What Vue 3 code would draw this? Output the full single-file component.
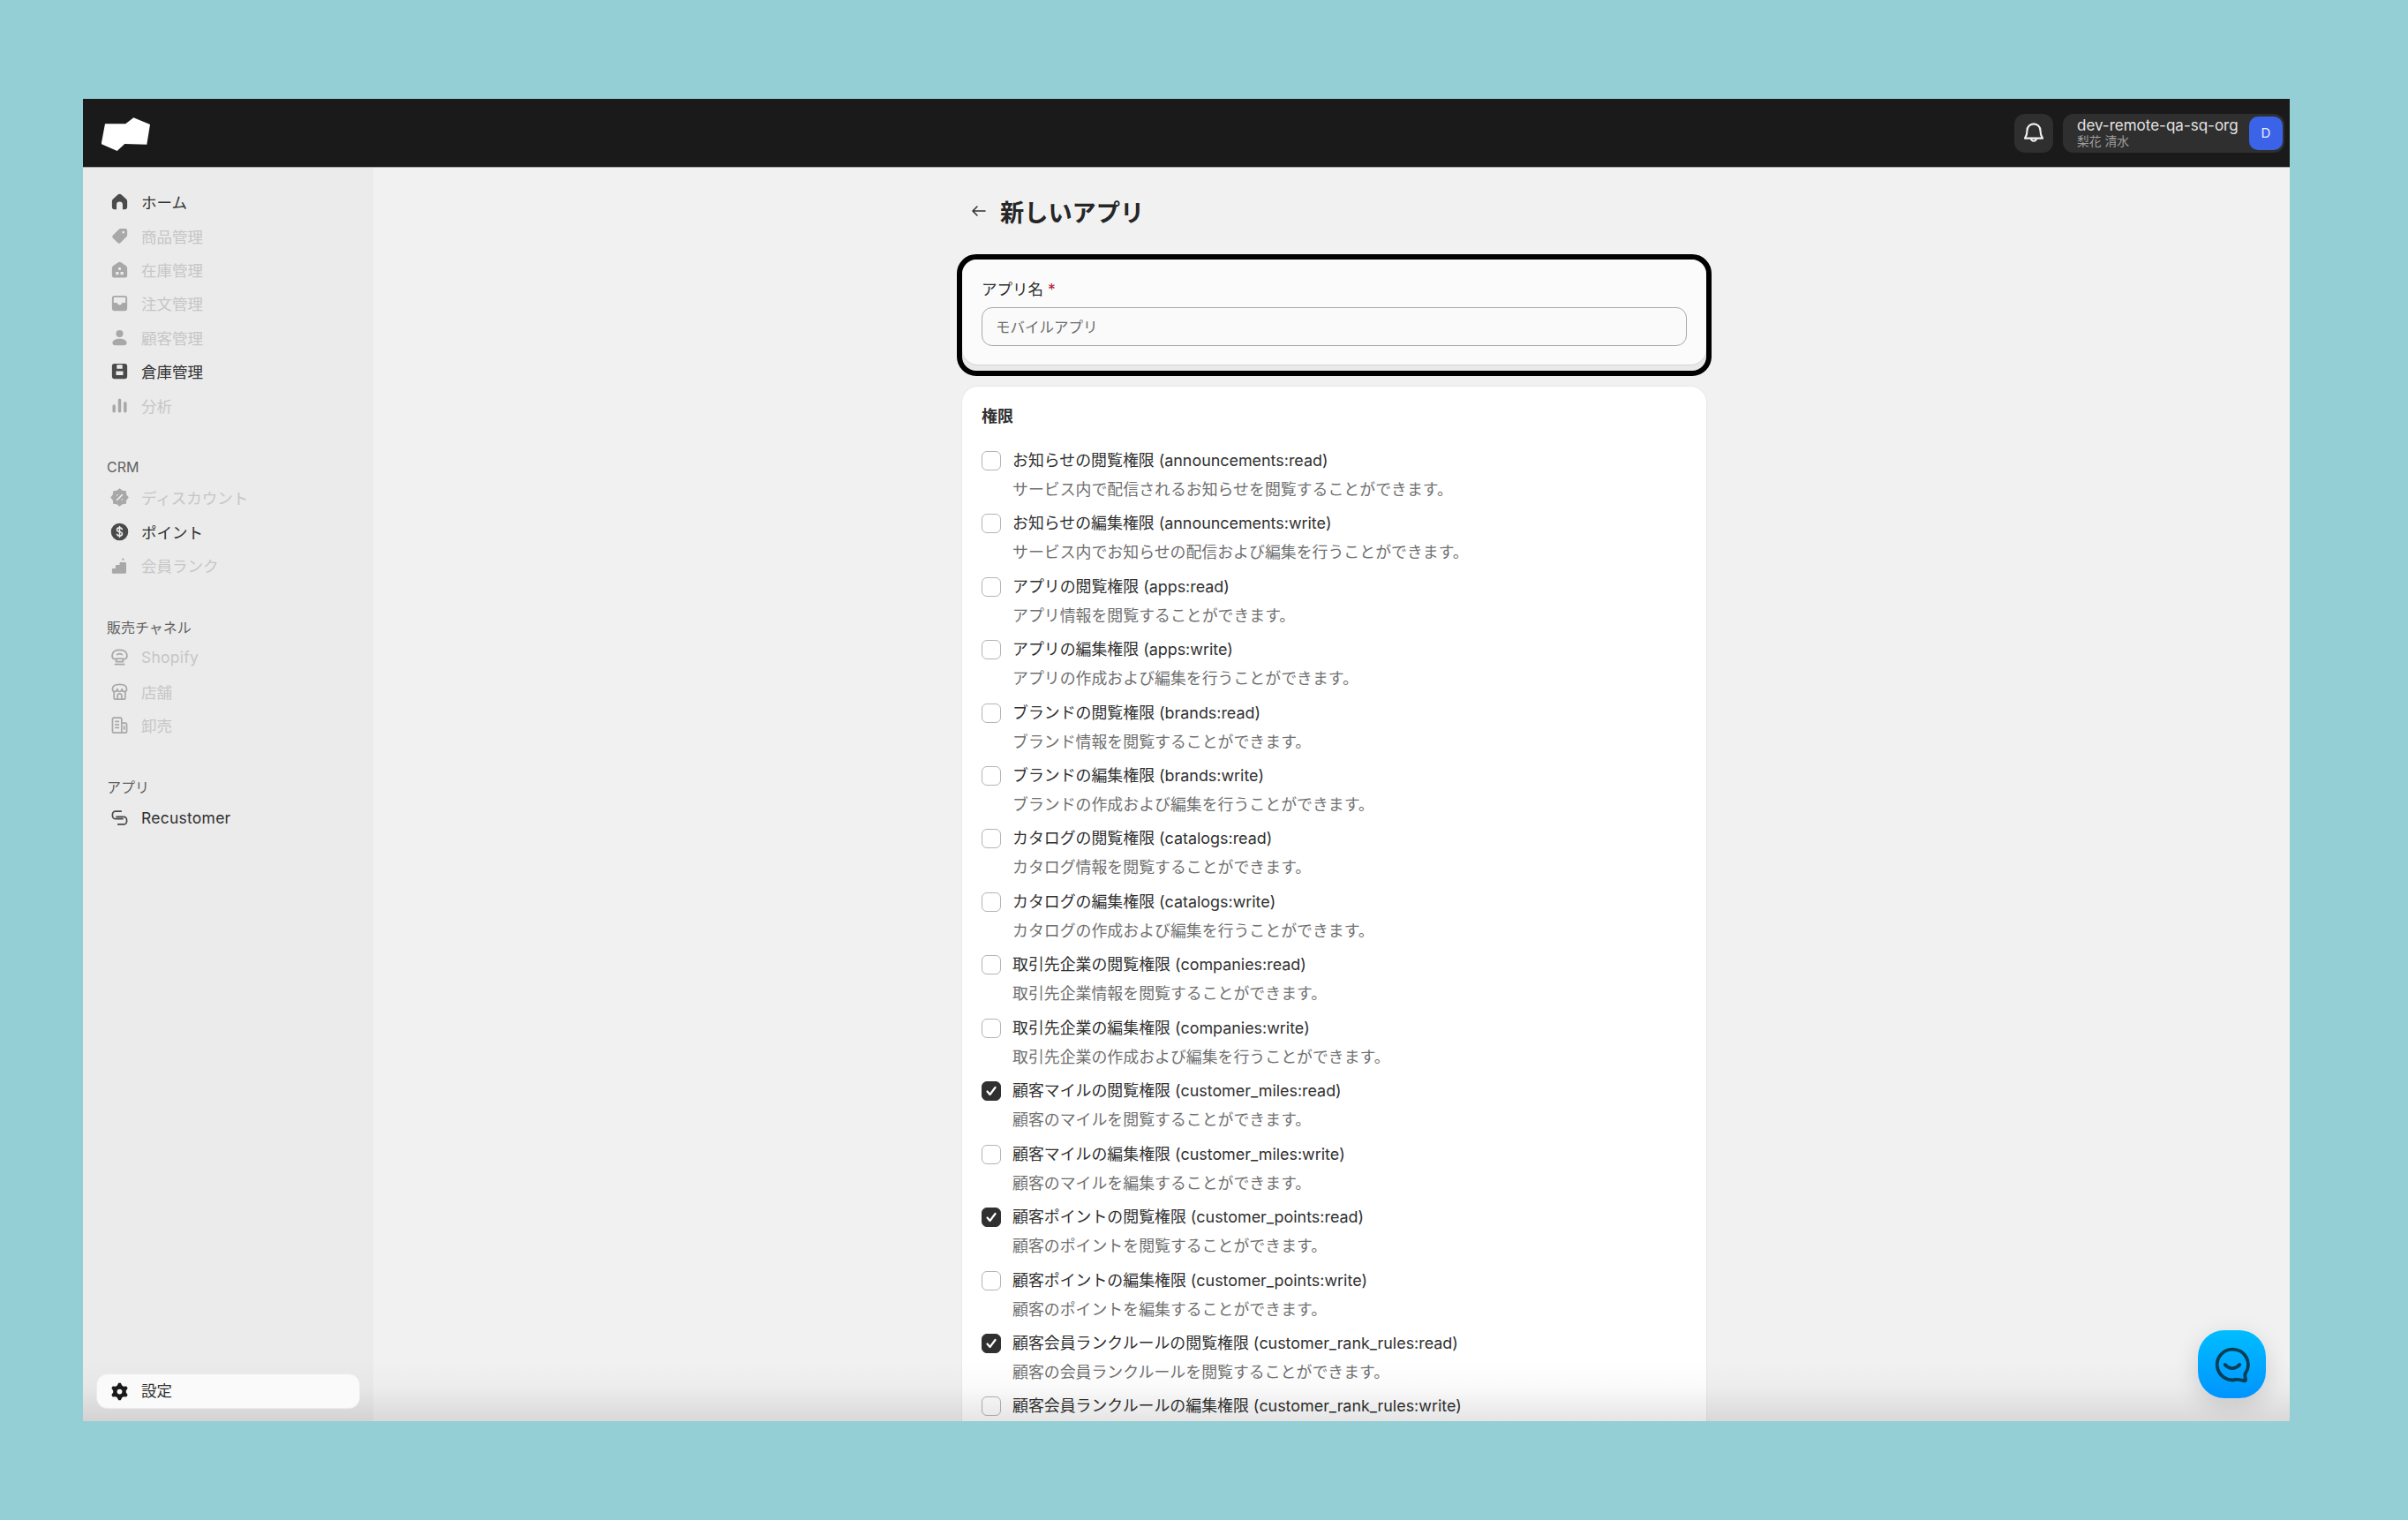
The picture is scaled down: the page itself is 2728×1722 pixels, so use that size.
<template>
  <div class="page">
    <div class="window">
      <header class="topbar">
        <svg class="logo" viewBox="0 0 60 40" width="60" height="40">
          <path d="M4 8.3h23.3l9-7 18.7 7.7-3.7 22.7-25-.7-8.6 8-18-8z" fill="#fff" />
        </svg>
        <div class="topbar-right">
          <button class="bell-btn" aria-label="通知">
            <svg viewBox="0 0 24 24" width="30" height="30" fill="none" stroke="#f2f2f2" stroke-width="1.700" stroke-linejoin="round">
              <path d="M12 3.500a6 6 0 0 0-6 6c0 4-.8 5.300-2 7h16c-1.200-1.700-2-3-2-7a6 6 0 0 0-6-6z" />
              <path d="M9.500 16.500a2.500 2.500 0 0 0 5 0" />
            </svg>
          </button>
          <div class="account">
            <div class="account-text">
              <span class="org">dev-remote-qa-sq-org</span>
              <span class="user">梨花 清水</span>
            </div>
            <span class="avatar">D</span>
          </div>
        </div>
      </header>

      <div class="body">
        <aside class="sidebar">
          <nav v-for="(group, i) in navGroups" :key="i" class="nav-group">
            <div v-if="group.title" class="nav-title">{{ group.title }}</div>
            <a v-for="item in group.items" :key="item.label" class="nav-item" :class="{ muted: item.muted, latin: item.latin }">
              <svg class="nav-icon" viewBox="0 0 20 20" width="23" height="23">
                <path v-if="icons[item.icon].fill" :d="icons[item.icon].fill" fill="currentColor" fill-rule="evenodd" />
                <path v-if="icons[item.icon].line" :d="icons[item.icon].line" fill="none" stroke="currentColor" stroke-width="1.500" stroke-linecap="round" stroke-linejoin="round" />
                <path v-if="icons[item.icon].cut" :d="icons[item.icon].cut" fill="none" stroke="#ebebeb" stroke-width="1.400" stroke-linecap="round" stroke-linejoin="round" />
              </svg>
              <span>{{ item.label }}</span>
            </a>
          </nav>
          <a class="settings">
            <svg viewBox="0 0 20 20" width="23" height="23">
              <path :d="gearPath" fill="#1a1a1a" fill-rule="evenodd" />
            </svg>
            <span>設定</span>
          </a>
        </aside>

        <main class="main">
          <div class="column">
            <div class="title-row">
              <svg viewBox="0 0 20 20" width="20" height="20" fill="none" stroke="#303030" stroke-width="1.500" stroke-linecap="round" stroke-linejoin="round">
                <path d="M17 10H3.500M8 5l-5 5 5 5" />
              </svg>
              <h1>新しいアプリ</h1>
            </div>

            <div class="highlight">
              <section class="card name-card">
                <label class="field-label">アプリ名 <em>*</em></label>
                <div class="text-input">モバイルアプリ</div>
              </section>
            </div>

            <section class="card perms-card">
              <h2>権限</h2>
              <div class="perm-list">
                <div v-for="perm in permissions" :key="perm.scope" class="perm">
                  <span class="checkbox" :class="{ checked: perm.checked }">
                    <svg v-if="perm.checked" viewBox="0 0 20 20" width="20" height="20" fill="none" stroke="#fff" stroke-width="2.200" stroke-linecap="round" stroke-linejoin="round">
                      <path d="M5.500 10.500l3 3.500 6-8" />
                    </svg>
                  </span>
                  <div class="perm-label">{{ perm.label }} ({{ perm.scope }})</div>
                  <div v-if="perm.desc" class="perm-desc">{{ perm.desc }}</div>
                </div>
              </div>
            </section>
          </div>
        </main>
      </div>

      <div class="bottom-fade"></div>

      <button class="chat-btn" aria-label="チャット">
        <svg viewBox="0 0 48 48" width="44" height="44" fill="none" stroke="#063f55" stroke-width="4.200" stroke-linecap="round" stroke-linejoin="round">
          <path d="M24 5a19 19 0 1 0 4.500 37.500c3.500-.5 7 1 10 1.500 1.500.2 2-.7 1.800-2-.5-3-1.300-4.500-.3-7A19 19 0 0 0 24 5z" />
          <path d="M15 24c2.500 3 5.500 4.500 9 4.500s6.500-1.500 9-4.500" />
        </svg>
      </button>
    </div>
  </div>
</template>

<script setup>
// scalloped badge for the discount icon
const badgePath = () => {
  const pts = []
  for (let i = 0; i < 16; i++) {
    const r = i % 2 === 0 ? 9 : 7.2
    const a = (Math.PI * 2 * i) / 16
    pts.push(`${(10 + r * Math.sin(a)).toFixed(2)} ${(10 - r * Math.cos(a)).toFixed(2)}`)
  }
  return 'M' + pts.join('L') + 'z'
}

const gearPath = (() => {
  const pts = []
  for (let i = 0; i < 24; i++) {
    const step = i % 4
    const r = step === 0 || step === 1 ? 8.6 : 6.4
    const a = (Math.PI * 2 * (i - 0.5)) / 24
    pts.push(`${(10 + r * Math.sin(a)).toFixed(2)} ${(10 - r * Math.cos(a)).toFixed(2)}`)
  }
  return 'M' + pts.join('L') + 'zM10 7.500a2.500 2.500 0 1 0 0 5 2.500 2.500 0 0 0 0-5z'
})()

const icons = {
  home: { fill: 'M2.500 9.500a2.500 2.500 0 0 1 .8-1.800l5-4.600a2.500 2.500 0 0 1 3.400 0l5 4.600a2.500 2.500 0 0 1 .8 1.800V15a2.500 2.500 0 0 1-2.500 2.500H13V13a3 3 0 0 0-6 0v4.500H5A2.500 2.500 0 0 1 2.500 15z' },
  tag: { fill: 'M11 2.500h4.500a2 2 0 0 1 2 2V9a2 2 0 0 1-.6 1.400l-6 6.200a2 2 0 0 1-2.800 0l-4.700-4.700a2 2 0 0 1 0-2.800l6.200-6A2 2 0 0 1 11 2.500zM13.700 5a1.200 1.200 0 1 0 0 2.400 1.200 1.200 0 0 0 0-2.400z' },
  inventory: { fill: 'M2.500 8.500a3 3 0 0 1 1.300-2.500l4.500-3a3 3 0 0 1 3.400 0l4.500 3a3 3 0 0 1 1.300 2.500V16a1.800 1.800 0 0 1-1.800 1.800H4.300A1.800 1.800 0 0 1 2.500 16zM8.800 7.800h2.400v2.600H8.800zM6.300 12.200h2.800v2.800H6.300zM10.900 12.200h2.800v2.800h-2.800z' },
  inbox: { fill: 'M5 2.500h10A2.500 2.500 0 0 1 17.500 5v10a2.500 2.500 0 0 1-2.500 2.500H5A2.500 2.500 0 0 1 2.500 15V5A2.500 2.500 0 0 1 5 2.500zM5 4.200a.8.8 0 0 0-.8.8v4.500h3.300c.4 1.400 1.300 2.200 2.500 2.200s2.100-.8 2.500-2.200h3.300V5a.8.8 0 0 0-.8-.8z' },
  person: { fill: 'M10 2.500a3.500 3.500 0 1 1 0 7 3.500 3.500 0 0 1 0-7zM3 15c0-2.500 3-4 7-4s7 1.500 7 4c0 1.600-1 2.500-2.500 2.500h-9C4 17.500 3 16.600 3 15z' },
  warehouse: { fill: 'M5 2.500h10A2.500 2.500 0 0 1 17.500 5v10a2.500 2.500 0 0 1-2.500 2.500H5A2.500 2.500 0 0 1 2.500 15V5A2.500 2.500 0 0 1 5 2.500zM7.200 3.800v3.700h5.600V3.800zM6.500 10v4h7v-4z' },
  chart: { fill: 'M3 10.500a1.500 1.500 0 0 1 3 0v5a1.500 1.500 0 0 1-3 0zM8.500 4.500a1.500 1.500 0 0 1 3 0v11a1.500 1.500 0 0 1-3 0zM14 7.500a1.500 1.500 0 0 1 3 0v8a1.500 1.500 0 0 1-3 0z' },
  discount: { fill: badgePath(), cut: 'M12.500 7.500l-5 5M7.500 7.800h.01M12.500 12.200h.01' },
  dollar: { fill: 'M10 1.500a8.500 8.500 0 1 1 0 17 8.500 8.500 0 0 1 0-17z', cut: 'M12.500 7.500c-.5-1-1.400-1.500-2.500-1.500-1.500 0-2.600.8-2.600 2s1.100 1.700 2.600 2 2.600.8 2.600 2-1.100 2-2.600 2c-1.200 0-2.100-.5-2.600-1.500M10 4.800v10.400' },
  rank: { fill: 'M2.500 14a1 1 0 0 1 1-1h2.500v-2.500a1 1 0 0 1 1-1h3V8a1 1 0 0 1 1-1h4.500a1 1 0 0 1 1 1v9a1 1 0 0 1-1 1H3.500a1 1 0 0 1-1-1zM13.300 2.500l1.500 2.300h-3z' },
  bag: { line: 'M4 11.500C2.700 10.500 2.500 9 2.800 7.500 3.300 5 6 3 10 3s6.700 2 7.200 4.500c.3 1.500.1 3-1.200 4-1.800 1.200-3.800-.2-6-.2s-4.200 1.400-6 .2zM7 11.500l-.5 3h7l-.5-3M5.500 17h9M7.500 7.500c1.500-1 3.500-1 5 0' },
  store: { line: 'M4.500 10v6.500a1 1 0 0 0 1 1h9a1 1 0 0 0 1-1V10M3 7.500C3 4.500 6 3 10 3s7 1.500 7 4.500c0 1.500-1 2.500-2.300 2.500S12.400 9 12.300 7.500C12 9 11.300 10 10 10S8 9 7.700 7.500C7.600 9 6.600 10 5.300 10S3 9 3 7.500zM8 17.500V14a2 2 0 0 1 4 0v3.500' },
  building: { line: 'M4.500 2.800h6a1.500 1.500 0 0 1 1.500 1.500v13.200H4.500A1.500 1.500 0 0 1 3 16V4.300a1.500 1.500 0 0 1 1.500-1.500zM12 8h3.500A1.500 1.500 0 0 1 17 9.500V16a1.500 1.500 0 0 1-1.500 1.500H12M6 6.500h3M6 9.500h3M6 12.500h3M14.500 11v3' },
  link: { line: 'M11.500 3.500H6a3 3 0 0 0-3 3V8a3 3 0 0 0 3 3h7M8.500 16.500H14a3 3 0 0 0 3-3V12a3 3 0 0 0-3-3H7' }
}

const navGroups = [
  {
    items: [
      { label: 'ホーム', icon: 'home' },
      { label: '商品管理', icon: 'tag', muted: true },
      { label: '在庫管理', icon: 'inventory', muted: true },
      { label: '注文管理', icon: 'inbox', muted: true },
      { label: '顧客管理', icon: 'person', muted: true },
      { label: '倉庫管理', icon: 'warehouse' },
      { label: '分析', icon: 'chart', muted: true }
    ]
  },
  {
    title: 'CRM',
    items: [
      { label: 'ディスカウント', icon: 'discount', muted: true },
      { label: 'ポイント', icon: 'dollar' },
      { label: '会員ランク', icon: 'rank', muted: true }
    ]
  },
  {
    title: '販売チャネル',
    items: [
      { label: 'Shopify', icon: 'bag', muted: true, latin: true },
      { label: '店舗', icon: 'store', muted: true },
      { label: '卸売', icon: 'building', muted: true }
    ]
  },
  {
    title: 'アプリ',
    items: [{ label: 'Recustomer', icon: 'link', latin: true }]
  }
]

const permissions = [
  { label: 'お知らせの閲覧権限', scope: 'announcements:read', desc: 'サービス内で配信されるお知らせを閲覧することができます。' },
  { label: 'お知らせの編集権限', scope: 'announcements:write', desc: 'サービス内でお知らせの配信および編集を行うことができます。' },
  { label: 'アプリの閲覧権限', scope: 'apps:read', desc: 'アプリ情報を閲覧することができます。' },
  { label: 'アプリの編集権限', scope: 'apps:write', desc: 'アプリの作成および編集を行うことができます。' },
  { label: 'ブランドの閲覧権限', scope: 'brands:read', desc: 'ブランド情報を閲覧することができます。' },
  { label: 'ブランドの編集権限', scope: 'brands:write', desc: 'ブランドの作成および編集を行うことができます。' },
  { label: 'カタログの閲覧権限', scope: 'catalogs:read', desc: 'カタログ情報を閲覧することができます。' },
  { label: 'カタログの編集権限', scope: 'catalogs:write', desc: 'カタログの作成および編集を行うことができます。' },
  { label: '取引先企業の閲覧権限', scope: 'companies:read', desc: '取引先企業情報を閲覧することができます。' },
  { label: '取引先企業の編集権限', scope: 'companies:write', desc: '取引先企業の作成および編集を行うことができます。' },
  { label: '顧客マイルの閲覧権限', scope: 'customer_miles:read', desc: '顧客のマイルを閲覧することができます。', checked: true },
  { label: '顧客マイルの編集権限', scope: 'customer_miles:write', desc: '顧客のマイルを編集することができます。' },
  { label: '顧客ポイントの閲覧権限', scope: 'customer_points:read', desc: '顧客のポイントを閲覧することができます。', checked: true },
  { label: '顧客ポイントの編集権限', scope: 'customer_points:write', desc: '顧客のポイントを編集することができます。' },
  { label: '顧客会員ランクルールの閲覧権限', scope: 'customer_rank_rules:read', desc: '顧客の会員ランクルールを閲覧することができます。', checked: true },
  { label: '顧客会員ランクルールの編集権限', scope: 'customer_rank_rules:write' }
]
</script>

<style>
html, body {
  margin: 0;
  background: #94cfd6;
}
</style>

<style scoped>
.page {
  width: 2728px;
  height: 1722px;
  padding: 112px 134px 112px 94px;
  box-sizing: border-box;
  font-family: Inter, "Noto Sans CJK JP", sans-serif;
  font-size: 17.5px;
  color: #303030;
  overflow: hidden;
}

.window {
  position: relative;
  height: 100%;
  display: flex;
  flex-direction: column;
  overflow: hidden;
  background: #f1f1f1;
}

/* Top bar */
.topbar {
  height: 78px;
  flex-shrink: 0;
  display: flex;
  align-items: center;
  justify-content: space-between;
  padding: 0 6px 0 21px;
  background: #1a1a1a;
  border-bottom: 1px solid #a8a8a8;
  box-sizing: border-box;
}

.logo {
  display: block;
  margin-top: 2px;
}

.topbar-right {
  display: flex;
  align-items: center;
  gap: 11px;
}

.bell-btn {
  width: 44px;
  height: 44px;
  display: flex;
  align-items: center;
  justify-content: center;
  padding: 0;
  border: none;
  border-radius: 12px;
  background: #2f2f2f;
}

.account {
  width: 251px;
  height: 44px;
  box-sizing: border-box;
  display: flex;
  align-items: center;
  justify-content: space-between;
  padding: 0 2px 0 16px;
  border-radius: 12px;
  background: #2f2f2f;
}

.account-text {
  display: flex;
  flex-direction: column;
}

.org {
  font-size: 17px;
  line-height: 20px;
  color: #e3e3e3;
}

.user {
  font-size: 13.8px;
  line-height: 17px;
  color: #a0a0a0;
}

.avatar {
  width: 38px;
  height: 38px;
  display: flex;
  align-items: center;
  justify-content: center;
  border-radius: 10px;
  background: #3b63e8;
  color: #e8edff;
  font-size: 15px;
}

.body {
  flex: 1;
  min-height: 0;
  display: flex;
}

/* Sidebar */
.sidebar {
  width: 329px;
  flex-shrink: 0;
  display: flex;
  flex-direction: column;
  background: #ebebeb;
  padding-top: 19.5px;
  box-sizing: border-box;
}

.nav-group {
  padding-left: 27px;
  margin-bottom: 36.2px;
}

.nav-title {
  height: 30px;
  line-height: 30px;
  font-size: 16px;
  color: #616161;
}

.nav-item {
  height: 38.4px;
  display: flex;
  align-items: center;
  gap: 13.5px;
  padding-left: 2.5px;
  color: #303030;
}

.nav-item.latin {
  letter-spacing: 0.25px;
}

.nav-icon {
  color: #4a4a4a;
  flex-shrink: 0;
}

.nav-item.muted {
  color: #c6c6c6;
}

.nav-item.muted .nav-icon {
  color: #a8a8a8;
}

.settings {
  position: relative;
  z-index: 2;
  height: 38px;
  margin: auto 16px 15px 16px;
  display: flex;
  align-items: center;
  gap: 13.5px;
  padding-left: 13.5px;
  border-radius: 12px;
  background: #fafafa;
  box-shadow: 0 0 0 1px #ececec;
}

.settings span {
  padding-bottom: 4px;
}

/* Main column */
.main {
  flex: 1;
  min-width: 0;
  display: flex;
  justify-content: center;
  padding-left: 6px;
  overflow: hidden;
}

.column {
  width: 843px;
}

.title-row {
  height: 40px;
  margin-top: 29px;
  margin-bottom: 29px;
  padding-left: 9px;
  display: flex;
  align-items: center;
  gap: 14px;
}

h1 {
  margin: 0;
  font-size: 27.2px;
  font-weight: 600;
  color: #262626;
}

.highlight {
  margin: 0 -6px 12px;
  padding-bottom: 7px;
  border: 6px solid #000;
  border-radius: 22px;
  background: #e9e9e9;
}

.card {
  background: #fff;
  border-radius: 18px;
  box-sizing: border-box;
}

.name-card {
  height: 119px;
  padding: 19px 22px 0;
  background: #fbfbfb;
  box-shadow: 0 1px 0 #d4d4d4;
}

.field-label {
  display: block;
  line-height: 30px;
  height: 30px;
  color: #303030;
}

.field-label em {
  font-style: normal;
  color: #b3223a;
}

.text-input {
  height: 44px;
  margin-top: 5px;
  box-sizing: border-box;
  padding-left: 15px;
  line-height: 44px;
  font-size: 16.5px;
  color: #6b6b6b;
  background: #fafafa;
  border: 1px solid #a8a8a8;
  border-radius: 12px;
}

.perms-card {
  padding: 18px 22px 30px;
  box-shadow: 0 0 0 1px #e8e8e8;
}

h2 {
  margin: 0 0 17.7px;
  height: 32px;
  line-height: 32px;
  font-size: 18px;
  font-weight: 600;
  color: #303030;
}

.perm-list {
  display: flex;
  flex-direction: column;
  gap: 6.46px;
}

.perm {
  display: grid;
  grid-template-columns: 22px 1fr;
  column-gap: 13px;
  line-height: 32px;
  font-size: 17.9px;
}

.checkbox {
  grid-row: 1 / span 2;
  width: 22px;
  height: 22px;
  margin-top: 5px;
  box-sizing: border-box;
  display: flex;
  align-items: center;
  justify-content: center;
  border: 1.5px solid #b4b4b4;
  border-radius: 6px;
  background: #fff;
}

.checkbox.checked {
  background: #303030;
  border-color: #303030;
}

.perm-label {
  color: #303030;
  white-space: nowrap;
}

.perm-desc {
  margin-top: 1px;
  color: #707070;
  white-space: nowrap;
}

/* Overlays */
.bottom-fade {
  position: absolute;
  left: 0;
  right: 0;
  bottom: 0;
  height: 70px;
  pointer-events: none;
  background: linear-gradient(to bottom, rgba(0, 0, 0, 0), rgba(0, 0, 0, 0.02) 45%, rgba(0, 0, 0, 0.1));
}

.chat-btn {
  position: absolute;
  left: 2396px;
  top: 1395px;
  width: 77px;
  height: 77px;
  display: flex;
  align-items: center;
  justify-content: center;
  padding: 0;
  border: none;
  border-radius: 30px;
  background: linear-gradient(to bottom, #00bdff, #0094ff);
  box-shadow: 0 8px 28px rgba(0, 0, 0, 0.14);
}
</style>
